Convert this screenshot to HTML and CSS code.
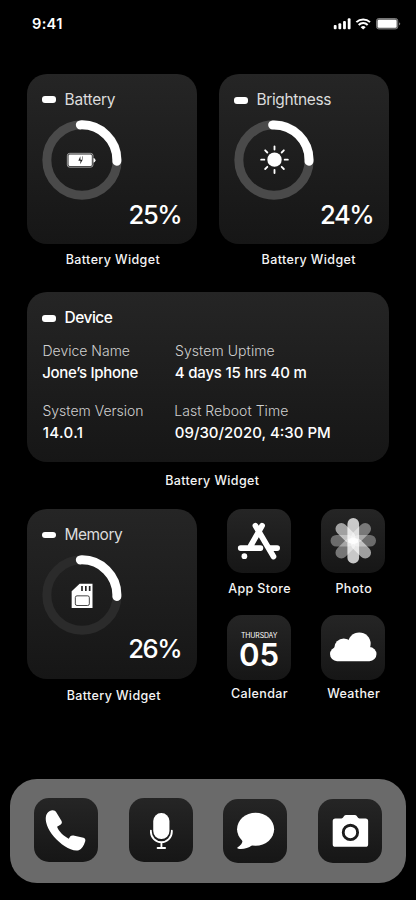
FILE: index.html
```
<!DOCTYPE html>
<html lang="en">
<head>
<meta charset="utf-8">
<title>Home Screen</title>
<link rel="stylesheet" href="styles.css">
</head>
<body>
<div class="screen">
  <header class="status">
    <span class="time">9:41</span>
    <svg class="status-icons" viewBox="1000 50 206 40" fill="#fff">
      <rect x="1002" y="74" width="8.500" height="12.500" rx="3"/><rect x="1016" y="69" width="8.500" height="17.500" rx="3"/><rect x="1030" y="62" width="8.500" height="24.500" rx="3"/><rect x="1044" y="54" width="8.500" height="32.500" rx="3"/>
      <g fill="none" stroke="#fff" stroke-width="6"><path d="M1070 65.500a29.500 29.500 0 0 1 41 0"/><path d="M1077 74a19 19 0 0 1 27 0"/></g>
      <path d="M1083 80.500a11 11 0 0 1 15 0l-7.500 7z"/>
      <rect x="1130.500" y="54.500" width="64" height="31.500" rx="7" fill="#555" stroke="#777" stroke-width="3"/>
      <rect x="1134" y="58" width="57" height="24.500" rx="4"/>
      <path d="M1198 65.500q4 1.500 4 5t-4 5z" fill="#777"/>
    </svg>
  </header>

  <section class="row row-top">
    <div class="cell">
      <article class="card square">
        <h2 class="head"><i class="dash"></i><span class="t-battery">Battery</span></h2>
        <svg class="ring" viewBox="67 166 240 240">
          <circle cx="187" cy="286" r="105.500" class="track"/>
          <path class="arc" d="M182 180.700A105.500 105.500 0 0 1 291.500 289.500"/>
          <rect x="143" y="266" width="77" height="41.500" rx="7" fill="#222" stroke="#ddd" stroke-width="2"/>
          <rect x="146.500" y="269.500" width="70" height="34.500" rx="4" fill="#fff"/>
          <path d="M221.500 280q6 1 6 7t-6 7z" fill="#fff"/>
          <path d="M182 275l-6 13h6.500l-1 11 7.500-14h-6.500z" fill="#222"/><path d="M188.500 275v10" stroke="#222" stroke-width="1.500"/>
        </svg>
        <p class="percent">25%</p>
      </article>
      <p class="caption">Battery Widget</p>
    </div>
    <div class="cell">
      <article class="card square">
        <h2 class="head"><i class="dash low"></i><span class="t-brightness">Brightness</span></h2>
        <svg class="ring" viewBox="71 166 240 240">
          <circle cx="191" cy="286" r="105.500" class="track"/>
          <path class="arc" d="M187 180.700A105.500 105.500 0 0 1 296 289.500"/>
          <circle cx="192.500" cy="285" r="21.500" fill="#fff"/>
          <g stroke="#fff" stroke-width="5.500" stroke-linecap="round"><path d="M192.500 245v9.500M192.500 315.500v9.500M152.500 285h9.500M223 285h9.500M164.500 257l6.500 6.500M214 306.500l6.500 6.500M164.500 313l6.500-6.500M214 263.500l6.500-6.500"/></g>
        </svg>
        <p class="percent">24%</p>
      </article>
      <p class="caption shift">Battery Widget</p>
    </div>
  </section>

  <section class="row row-device">
    <article class="card wide">
      <h2 class="head strong"><i class="dash low"></i><span class="t-device">Device</span></h2>
      <dl class="facts">
        <div><dt>Device Name</dt><dd class="owner">Jone’s Iphone</dd></div>
        <div><dt class="loose">System Uptime</dt><dd class="uptime">4 days 15 hrs 40 m</dd></div>
        <div><dt>System Version</dt><dd class="version">14.0.1</dd></div>
        <div><dt class="reboot-label">Last Reboot Time</dt><dd class="reboot">09/30/2020, 4:30 PM</dd></div>
      </dl>
    </article>
    <p class="caption device-caption">Battery Widget</p>
  </section>

  <section class="row row-bottom">
    <div class="cell">
      <article class="card square">
        <h2 class="head"><i class="dash low"></i><span class="t-memory">Memory</span></h2>
        <svg class="ring" viewBox="67 165 240 240">
          <circle cx="187" cy="285" r="105.500" class="track dim"/>
          <path class="arc" d="M182 179.700A105.500 105.500 0 0 1 291.500 289.500"/>
          <path d="M156 274l24-22.500h38.500V324H156z" fill="#fff"/>
          <path d="M187 258v15M198.500 258v15M210 258v15" stroke="#222" stroke-width="5"/>
          <rect x="167" y="287.500" width="42" height="29" rx="5" fill="none" stroke="#222" stroke-width="2.500"/>
        </svg>
        <p class="percent">26%</p>
      </article>
      <p class="caption memory-caption">Battery Widget</p>
    </div>
    <div class="apps">
      <div class="app">
        <svg class="tile" viewBox="36 27 192 192">
          <g stroke="#fff" stroke-width="17" stroke-linecap="round"><path d="M141 77L107 137M121 77L175 169M77 144h59M166 144h20"/></g><circle cx="88" cy="168" r="8.500" fill="#fff"/>
        </svg>
        <p class="caption">App Store</p>
      </div>
      <div class="app">
        <svg class="tile" viewBox="318 27 192 192" fill="#fff">
          <g transform="translate(414.500 122)">
            <rect x="-17.500" y="-68" width="35" height="70" rx="17.500" opacity=".4" transform="rotate(45)"/>
            <rect x="-17.500" y="-68" width="35" height="70" rx="17.500" opacity=".35" transform="rotate(90)"/>
            <rect x="-17.500" y="-68" width="35" height="70" rx="17.500" opacity=".4" transform="rotate(225)"/>
            <rect x="-17.500" y="-68" width="35" height="70" rx="17.500" opacity=".35" transform="rotate(270)"/>
            <rect x="-17.500" y="-68" width="35" height="70" rx="17.500" opacity=".58" transform="rotate(135)"/>
            <rect x="-17.500" y="-68" width="35" height="70" rx="17.500" opacity=".58" transform="rotate(315)"/>
            <rect x="-17.500" y="-68" width="35" height="78" rx="17.500" opacity=".76"/>
            <rect x="-17.500" y="-68" width="35" height="78" rx="17.500" opacity=".76" transform="rotate(180)"/>
          </g>
        </svg>
        <p class="caption">Photo</p>
      </div>
      <div class="app low-app">
        <div class="tile calendar"><span class="weekday">THURSDAY</span><span class="day">05</span></div>
        <p class="caption">Calendar</p>
      </div>
      <div class="app low-app">
        <svg class="tile" viewBox="318 33 192 192" fill="#fff"><circle cx="386" cy="132" r="28.500"/><circle cx="432.500" cy="119" r="34"/><rect x="345" y="129" width="139" height="42" rx="21"/></svg>
        <p class="caption">Weather</p>
      </div>
    </div>
  </section>

  <nav class="dock">
    <svg class="tile" viewBox="104 85 192 192" fill="#fff"><path d="M150 125C158 119 167 121 171 128L186 153C189 158 187 162 183 165L173 171C178 185 192 198 208 207L212 200C215 197 220 196 225 198L252 204C257 206 259 210 257 215C253 228 247 238 238 241C215 246 185 225 163 200C145 178 136 155 140 138C142 132 146 128 150 125Z"/></svg>
    <svg class="tile" viewBox="387 85 192 192" fill="#fff"><rect x="459.500" y="130" width="48.500" height="78" rx="24"/><path d="M452.500 183v3a31.300 31.300 0 0 0 62.600 0v-3M484 218v15M472.500 234.500h22.500" fill="none" stroke="#fff" stroke-width="5.500" stroke-linecap="round"/></svg>
    <svg class="tile lower" viewBox="45 88 192 192" fill="#fff"><ellipse cx="142.500" cy="178.500" rx="55.500" ry="49.500"/><path d="M103 208C105 221 97 228 88 233Q86 236 91 237C106 239 120 235 132 226Z"/></svg>
    <svg class="tile lower" viewBox="328 88 192 192" fill="#fff"><path d="M380 146h18q4 0 6-4l2-3q2-3.500 6-3.500h26q4 0 6 3.500l2 3q2 4 6 4h18q8 0 8 8v69q0 8-8 8h-90q-8 0-8-8v-69q0-8 8-8z"/><circle cx="425" cy="188" r="21.500" fill="#fff" stroke="#1c1c1c" stroke-width="8.500"/></svg>
  </nav>
</div>
</body>
</html>
```
FILE: styles.css
```
* { box-sizing: border-box; margin: 0; padding: 0; }
body { background: #000; color: #fff; font-family: Inter, "Liberation Sans", sans-serif; }
.screen { width: 416px; height: 900px; overflow: hidden; display: flex; flex-direction: column; }
.status { flex: none; height: 74.4px; padding: 13.4px 14px 0 32px; display: flex; justify-content: space-between; align-items: flex-start; }
.time { margin-top: .7px; font-size: 14.6px; line-height: 20px; font-weight: 600; letter-spacing: .3px; }
.status-icons { width: 68.7px; height: 13.3px; margin-top: 3.3px; }
.row { flex: none; padding: 0 27.2px; }
.row-top { height: 218.1px; display: flex; justify-content: space-between; }
.row-device { height: 216.5px; }
.row-bottom { height: 270.3px; display: flex; justify-content: space-between; }
.cell { width: 169.7px; }
.card { height: 169.7px; border-radius: 20px; padding: 15px; background: linear-gradient(#252525, #161616); }
.square { display: flex; flex-direction: column; }
.head { flex: none; display: flex; align-items: flex-start; height: 31.1px; font-size: 15.5px; line-height: 20px; font-weight: 400; color: #dcdcdc; }
.head span { padding-top: .8px; }
.t-battery { letter-spacing: -.2px; }
.t-brightness { letter-spacing: -.36px; }
.t-device { letter-spacing: -.5px; }
.t-memory { letter-spacing: -.5px; }
.strong { font-weight: 500; color: #fff; }
.dash { width: 14px; height: 6.2px; margin: 7.1px 8px 0 .3px; border-radius: 3px; background: #fff; }
.dash.low { margin-top: 8px; }
.ring { flex: none; width: 80px; height: 80px; }
.track { fill: none; stroke: #4a4a4a; stroke-width: 27; }
.dim { stroke: #2b2b2b; }
.arc { fill: none; stroke: #fff; stroke-width: 27; stroke-linecap: round; }
.percent { margin: -.7px .5px 0 0; text-align: right; font-size: 25.6px; line-height: 30px; font-weight: 500; letter-spacing: -1.4px; }
.caption { margin-top: 7.6px; padding-left: 1.8px; font-size: 12.5px; line-height: 16px; font-weight: 500; letter-spacing: .38px; text-align: center; white-space: nowrap; color: #f4f4f4; }
.shift { padding-left: 9.6px; }
.device-caption { margin-top: 10.6px; padding-left: 8.6px; }
.memory-caption { margin-top: 9.8px; padding-left: 3.6px; }
.facts { display: grid; grid-template-columns: 132px 1fr; row-gap: 14px; padding-top: 1px; }
.facts div { height: 46px; }
dt { padding-left: .3px; font-size: 14px; line-height: 22px; font-weight: 300; color: #d0d0d0; white-space: nowrap; }
dd { padding-top: .8px; font-size: 15px; line-height: 22px; font-weight: 500; white-space: nowrap; }
.loose { padding-left: .8px; letter-spacing: .08px; }
.reboot-label { padding-left: 0; letter-spacing: .05px; }
.owner { letter-spacing: -.28px; }
.uptime { padding-left: .6px; letter-spacing: -.2px; }
.version { padding-left: .6px; letter-spacing: .35px; }
.reboot { padding-left: .6px; }
.apps { display: grid; grid-template-columns: 64.2px 64.2px; grid-template-rows: 106.5px 100px; column-gap: 30px; margin-right: 3.4px; }
.app { display: flex; flex-direction: column; align-items: center; }
.app .caption { padding-left: .8px; }
.tile { flex: none; display: block; width: 64.2px; height: 64.2px; border-radius: 15px; background: linear-gradient(#252525, #161616); }
.low-app .caption { margin-top: 6.8px; }
.calendar { display: flex; flex-direction: column; align-items: center; padding-top: 15.6px; }
.weekday { font-size: 6.9px; line-height: 9px; font-weight: 400; letter-spacing: -.1px; }
.day { font-size: 31.2px; line-height: 30px; font-weight: 600; }
.dock { flex: none; width: 395.5px; height: 103.5px; margin-left: 10.3px; padding: 19px 24px 0; border-radius: 27px; background: #6a6a6a; display: flex; justify-content: space-between; }
.lower { margin-top: 1px; }
```
